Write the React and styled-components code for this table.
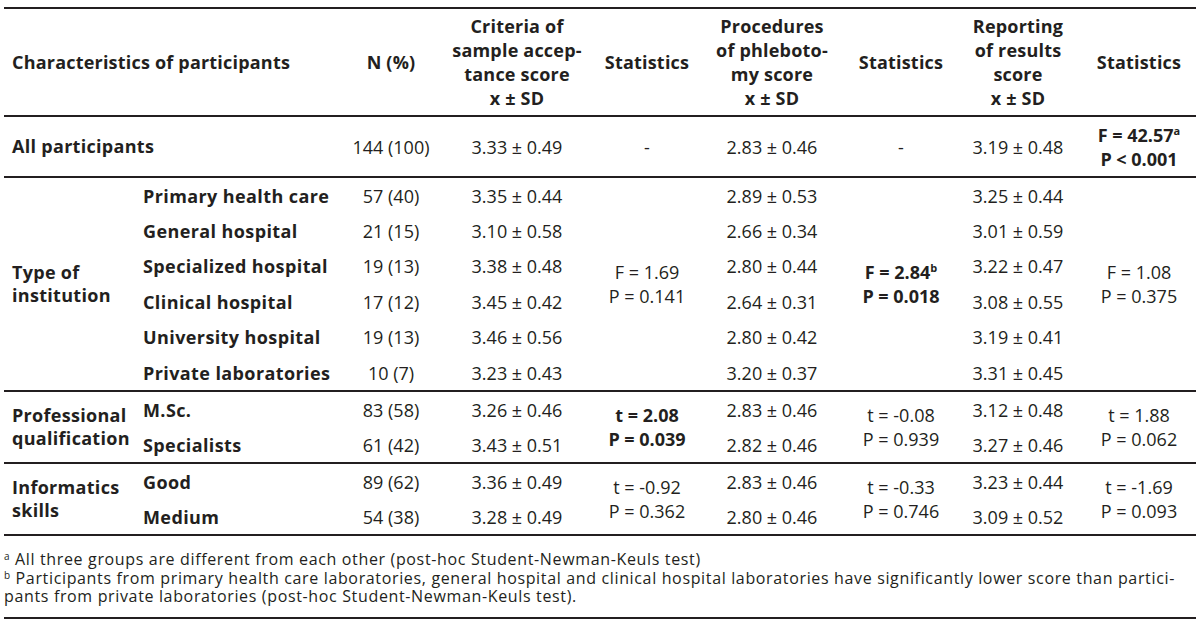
import styled, { createGlobalStyle } from "styled-components";

const GlobalStyle = createGlobalStyle`
  body {
    margin: 0;
    background: #fff;
    color: #231f20;
    font-family: "Open Sans", "Liberation Sans", sans-serif;
  }
`;

const institutions = [
  ["Primary health care", "57 (40)", "3.35 ± 0.44", "2.89 ± 0.53", "3.25 ± 0.44"],
  ["General hospital", "21 (15)", "3.10 ± 0.58", "2.66 ± 0.34", "3.01 ± 0.59"],
  ["Specialized hospital", "19 (13)", "3.38 ± 0.48", "2.80 ± 0.44", "3.22 ± 0.47"],
  ["Clinical hospital", "17 (12)", "3.45 ± 0.42", "2.64 ± 0.31", "3.08 ± 0.55"],
  ["University hospital", "19 (13)", "3.46 ± 0.56", "2.80 ± 0.42", "3.19 ± 0.41"],
  ["Private laboratories", "10 (7)", "3.23 ± 0.43", "3.20 ± 0.37", "3.31 ± 0.45"],
];

const qualification = [
  ["M.Sc.", "83 (58)", "3.26 ± 0.46", "2.83 ± 0.46", "3.12 ± 0.48"],
  ["Specialists", "61 (42)", "3.43 ± 0.51", "2.82 ± 0.46", "3.27 ± 0.46"],
];

const skills = [
  ["Good", "89 (62)", "3.36 ± 0.49", "2.83 ± 0.46", "3.23 ± 0.44"],
  ["Medium", "54 (38)", "3.28 ± 0.49", "2.80 ± 0.46", "3.09 ± 0.52"],
];

function Stat({ top, bottom, bold }) {
  return (
    <StatText $bold={bold}>
      {top}
      <br />
      {bottom}
    </StatText>
  );
}

function GroupSection({ label, rows, stats, rowHeight }) {
  return (
    <Section>
      {rows.map((r, i) => (
        <tr key={r[0]}>
          {i === 0 && (
            <GroupLabel rowSpan={rows.length}>
              {label[0]}
              <br />
              {label[1]}
            </GroupLabel>
          )}
          <SubLabel $h={rowHeight}>{r[0]}</SubLabel>
          <Cell>{r[1]}</Cell>
          <Cell>{r[2]}</Cell>
          {i === 0 && <Cell rowSpan={rows.length}>{stats[0]}</Cell>}
          <Cell>{r[3]}</Cell>
          {i === 0 && <Cell rowSpan={rows.length}>{stats[1]}</Cell>}
          <Cell>{r[4]}</Cell>
          {i === 0 && (
            <Cell rowSpan={rows.length} $shift>
              {stats[2]}
            </Cell>
          )}
        </tr>
      ))}
    </Section>
  );
}

export default function App() {
  return (
    <Page>
      <GlobalStyle />
      <Table>
        <colgroup>
          <col style={{ width: 136 }} />
          <col style={{ width: 190 }} />
          <col style={{ width: 122 }} />
          <col style={{ width: 130 }} />
          <col style={{ width: 130 }} />
          <col style={{ width: 120 }} />
          <col style={{ width: 138 }} />
          <col style={{ width: 96 }} />
          <col style={{ width: 130 }} />
        </colgroup>
        <thead>
          <tr>
            <HeadCell colSpan={2} $align="left">
              Characteristics of participants
            </HeadCell>
            <HeadCell>N (%)</HeadCell>
            <HeadCell>
              Criteria of
              <br />
              sample accep-
              <br />
              tance score
              <br />x ± SD
            </HeadCell>
            <HeadCell>Statistics</HeadCell>
            <HeadCell>
              Procedures
              <br />
              of phleboto-
              <br />
              my score
              <br />x ± SD
            </HeadCell>
            <HeadCell>Statistics</HeadCell>
            <HeadCell>
              Reporting
              <br />
              of results
              <br />
              score
              <br />x ± SD
            </HeadCell>
            <HeadCell $shift>Statistics</HeadCell>
          </tr>
        </thead>
        <Section>
          <tr>
            <GroupLabel colSpan={2} $h={59}>
              All participants
            </GroupLabel>
            <Cell>144 (100)</Cell>
            <Cell>3.33 ± 0.49</Cell>
            <Cell>-</Cell>
            <Cell>2.83 ± 0.46</Cell>
            <Cell>-</Cell>
            <Cell>3.19 ± 0.48</Cell>
            <Cell $shift>
              <Stat
                bold
                top={
                  <>
                    F = 42.57<Sup>a</Sup>
                  </>
                }
                bottom="P < 0.001"
              />
            </Cell>
          </tr>
        </Section>
        <GroupSection
          label={["Type of", "institution"]}
          rows={institutions}
          rowHeight={35.4}
          stats={[
            <Stat top="F = 1.69" bottom="P = 0.141" />,
            <Stat
              bold
              top={
                <>
                  F = 2.84<Sup>b</Sup>
                </>
              }
              bottom="P = 0.018"
            />,
            <Stat top="F = 1.08" bottom="P = 0.375" />,
          ]}
        />
        <GroupSection
          label={["Professional", "qualification"]}
          rows={qualification}
          rowHeight={35}
          stats={[
            <Stat bold top="t = 2.08" bottom="P = 0.039" />,
            <Stat top="t = -0.08" bottom="P = 0.939" />,
            <Stat top="t = 1.88" bottom="P = 0.062" />,
          ]}
        />
        <GroupSection
          label={["Informatics", "skills"]}
          rows={skills}
          rowHeight={35}
          stats={[
            <Stat top="t = -0.92" bottom="P = 0.362" />,
            <Stat top="t = -0.33" bottom="P = 0.746" />,
            <Stat top="t = -1.69" bottom="P = 0.093" />,
          ]}
        />
      </Table>
      <Notes>
        <Note>
          <NoteSup>a</NoteSup> All three groups are different from each other
          (post-hoc Student-Newman-Keuls test)
        </Note>
        <Note>
          <NoteSup>b</NoteSup> Participants from primary health care
          laboratories, general hospital and clinical hospital laboratories
          have significantly lower score than partici-
        </Note>
        <Note>
          pants from private laboratories (post-hoc Student-Newman-Keuls test).
        </Note>
      </Notes>
    </Page>
  );
}

const Page = styled.div`
  padding: 7px 4px 0;
  width: 1192px;
`;

const Table = styled.table`
  width: 1192px;
  table-layout: fixed;
  border-collapse: collapse;
  border-top: 2px solid #231f20;
  border-bottom: 2px solid #231f20;
  font-size: 18px;

  thead tr {
    border-bottom: 2px solid #231f20;
  }
`;

const Section = styled.tbody`
  border-top: 2px solid #231f20;
`;

const HeadCell = styled.th`
  height: 106px;
  padding: 0 0 0 ${(p) => (p.$shift ? "16px" : p.$align === "left" ? "8px" : "0")};
  text-align: ${(p) => p.$align || "center"};
  vertical-align: middle;
  font-weight: 700;
  line-height: 24px;
  letter-spacing: 0.2px;
  white-space: nowrap;
`;

const Cell = styled.td`
  padding: 0 0 0 ${(p) => (p.$shift ? "16px" : "0")};
  text-align: center;
  vertical-align: middle;
  white-space: nowrap;
  line-height: 24px;
`;

const GroupLabel = styled.td`
  height: ${(p) => (p.$h ? `${p.$h}px` : "auto")};
  padding: 0 0 0 8px;
  vertical-align: middle;
  font-weight: 700;
  line-height: 23.5px;
  letter-spacing: 0.3px;
  white-space: nowrap;
`;

const SubLabel = styled.td`
  height: ${(p) => p.$h}px;
  padding: 0 0 0 3px;
  vertical-align: middle;
  font-weight: 700;
  letter-spacing: 0.4px;
  white-space: nowrap;
`;

const StatText = styled.div`
  font-weight: ${(p) => (p.$bold ? 700 : 400)};
  line-height: 24px;
`;

const Sup = styled.sup`
  font-size: 11px;
  line-height: 0;
  vertical-align: 7px;
`;

const Notes = styled.div`
  padding: 14px 0 11px;
  border-bottom: 2px solid #231f20;
  font-size: 16px;
  letter-spacing: 0.65px;
`;

const Note = styled.div`
  line-height: 18.5px;
  white-space: nowrap;
`;

const NoteSup = styled.sup`
  font-size: 10px;
  line-height: 0;
  vertical-align: 5px;
`;
